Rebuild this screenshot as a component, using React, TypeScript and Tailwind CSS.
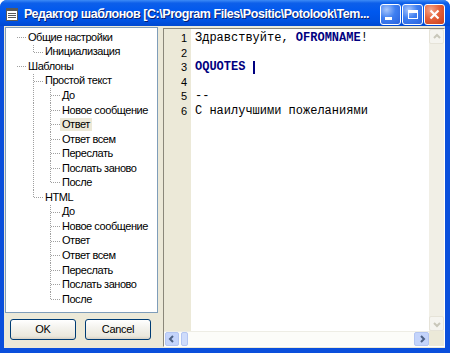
import React from "react";

type Row = { t: string; l: number; last?: boolean; cont?: number[]; sel?: boolean };

const rows: Row[] = [
  { t: "Общие настройки", l: 0 },
  { t: "Инициализация", l: 1, last: true },
  { t: "Шаблоны", l: 0 },
  { t: "Простой текст", l: 1 },
  { t: "До", l: 2, cont: [1] },
  { t: "Новое сообщение", l: 2, cont: [1] },
  { t: "Ответ", l: 2, cont: [1], sel: true },
  { t: "Ответ всем", l: 2, cont: [1] },
  { t: "Переслать", l: 2, cont: [1] },
  { t: "Послать заново", l: 2, cont: [1] },
  { t: "После", l: 2, cont: [1], last: true },
  { t: "HTML", l: 1, last: true },
  { t: "До", l: 2 },
  { t: "Новое сообщение", l: 2 },
  { t: "Ответ", l: 2 },
  { t: "Ответ всем", l: 2 },
  { t: "Переслать", l: 2 },
  { t: "Послать заново", l: 2 },
  { t: "После", l: 2, last: true },
];

const RH = 14.56;

function Guides({ r }: { r: Row }) {
  const w = 20 + 17 * r.l;
  const mid = 7.5;
  const x = 10 + 17 * r.l + 0.5;
  return (
    <svg width={w} height={RH} className="shrink-0" shapeRendering="crispEdges">
      <g stroke="#a0a0a0" strokeWidth="1" strokeDasharray="1 1">
        <line x1={x} y1={mid} x2={x + 10} y2={mid} />
        {r.l >= 1 && <line x1={x} y1={0} x2={x} y2={r.last ? mid : RH} />}
        {(r.cont || []).map((k) => (
          <line key={k} x1={10 + 17 * k + 0.5} y1={0} x2={10 + 17 * k + 0.5} y2={RH} />
        ))}
      </g>
    </svg>
  );
}

function XpButton({ children, red }: { children: React.ReactNode; red?: boolean }) {
  return (
    <div
      className={
        "w-[21px] h-[21px] rounded-[3px] border border-white flex items-center justify-center " +
        (red
          ? "bg-[radial-gradient(circle_at_30%_25%,#f4a58a_0%,#e5623b_45%,#c8401d_100%)]"
          : "bg-[radial-gradient(circle_at_30%_25%,#a8c6fb_0%,#3f7ff1_45%,#2a62dc_100%)]")
      }
    >
      {children}
    </div>
  );
}

function Chevron({ dir, color }: { dir: "up" | "down" | "left" | "right"; color: string }) {
  const paths: Record<string, string> = {
    up: "M2 6 L5 3 L8 6",
    down: "M2 4 L5 7 L8 4",
    left: "M6 2 L3 5 L6 8",
    right: "M4 2 L7 5 L4 8",
  };
  return (
    <svg width="10" height="10" viewBox="0 0 10 10">
      <path d={paths[dir]} stroke={color} strokeWidth="2" fill="none" />
    </svg>
  );
}

export default function App() {
  const sans = { fontFamily: '"Liberation Sans", Arial, sans-serif' };
  const mono = { fontFamily: '"Liberation Mono", "Courier New", monospace' };
  return (
    <div
      className="w-[450px] h-[353px] flex flex-col rounded-t-[7px] overflow-hidden bg-[#0a4fdc]"
      style={sans}
    >
      {/* Title bar */}
      <div className="h-[26px] shrink-0 flex items-center pl-[6px] pr-[5px] bg-[linear-gradient(180deg,#3d8bf6_0%,#0d5fea_12%,#0058ee_45%,#0052e2_80%,#0049d1_100%)]">
        <svg width="12" height="13" viewBox="0 0 12 13" className="shrink-0 mt-[3px]">
          <rect x="0.5" y="0.5" width="11" height="12" fill="#fff" stroke="#5a5a5a" />
          <rect x="1" y="1" width="10" height="2" fill="#5a5a5a" />
          <line x1="2" y1="5.5" x2="10" y2="5.5" stroke="#5a5a5a" />
          <line x1="2" y1="7.5" x2="10" y2="7.5" stroke="#5a5a5a" />
          <line x1="2" y1="9.5" x2="10" y2="9.5" stroke="#5a5a5a" />
        </svg>
        <div className="ml-[6px] mt-[3px] flex-1 text-white font-bold text-[12.5px] whitespace-nowrap tracking-[-0.45px] [text-shadow:1px_1px_0_#0a1e6e]">
          Редактор шаблонов [C:\Program Files\Positic\Potolook\Tem...
        </div>
        <div className="flex gap-[1px] shrink-0 mt-[2px]">
          <XpButton>
            <div className="w-[7px] h-[3px] bg-white mt-[8px] mr-[4px]" />
          </XpButton>
          <XpButton>
            <div className="w-[10px] h-[9px] border border-white border-t-[3px]" />
          </XpButton>
          <XpButton red>
            <svg width="11" height="11" viewBox="0 0 11 11">
              <path d="M1.5 1.5 L9.5 9.5 M9.5 1.5 L1.5 9.5" stroke="#fff" strokeWidth="2.2" />
            </svg>
          </XpButton>
        </div>
      </div>

      {/* Body */}
      <div className="flex-1 flex pl-[4px] pr-[5px] pb-[5px]">
        <div className="flex-1 flex bg-[#ECE9D8]">
          {/* Left column */}
          <div className="w-[159px] shrink-0 flex flex-col pl-[1px] pt-[1px]">
            <div className="w-[153px] h-[286px] bg-white border border-[#7f9db9] pt-[2px] overflow-hidden">
              {rows.map((r, i) => (
                <div key={i} className="flex items-center h-[14.56px]">
                  <Guides r={r} />
                  <span
                    className={
                      "px-[2px] text-[11px] leading-[13px] tracking-[-0.45px] text-black whitespace-nowrap " +
                      (r.sel ? "bg-[#ECE9D8]" : "")
                    }
                  >
                    {r.t}
                  </span>
                </div>
              ))}
            </div>
            <div className="flex gap-[9px] pl-[5px] mt-[6px]">
              {["OK", "Cancel"].map((b) => (
                <div
                  key={b}
                  className="w-[66px] h-[21px] rounded-[3px] border border-[#003c74] bg-[linear-gradient(180deg,#ffffff_0%,#f4f3ee_40%,#ebe8dd_85%,#d6d0c5_100%)] flex items-center justify-center text-[11px] tracking-[-0.3px] text-black"
                >
                  {b}
                </div>
              ))}
            </div>
          </div>

          {/* Editor */}
          <div className="flex-1 flex flex-col mt-[2px] mb-[1px] border-l border-t border-[#8a877a] border-r border-r-white border-b border-b-white">
            <div className="flex-1 flex min-h-0">
              <div className="w-[27px] shrink-0 bg-[#ECE9D8] pt-[2px] pr-[4px] text-right text-[11px] text-black">
                {[1, 2, 3, 4, 5, 6].map((n) => (
                  <div key={n} className="h-[14.5px] leading-[14.5px]">
                    {n}
                  </div>
                ))}
              </div>
              <div className="flex-1 bg-white pt-[2px] pl-[4px] text-[12px] text-black" style={mono}>
                <div className="h-[14.5px] leading-[14.5px] whitespace-pre">
                  Здравствуйте, <b className="text-[#000080]">OFROMNAME</b>!
                </div>
                <div className="h-[14.5px]" />
                <div className="h-[14.5px] leading-[14.5px] whitespace-pre flex items-center">
                  <b className="text-[#000080]">OQUOTES </b>
                  <span className="inline-block w-[2px] h-[13px] bg-[#000080]" />
                </div>
                <div className="h-[14.5px]" />
                <div className="h-[14.5px] leading-[14.5px] whitespace-pre">--</div>
                <div className="h-[14.5px] leading-[14.5px] whitespace-pre">С наилучшими пожеланиями</div>
              </div>
              {/* vertical scrollbar */}
              <div className="w-[15px] shrink-0 bg-[#f1efe6] flex flex-col justify-between">
                <div className="h-[15px] rounded-[2px] border border-[#e6e3d8] bg-[#f5f4ef] flex items-center justify-center">
                  <Chevron dir="up" color="#c9c7ba" />
                </div>
                <div className="h-[15px] rounded-[2px] border border-[#e6e3d8] bg-[#f5f4ef] flex items-center justify-center">
                  <Chevron dir="down" color="#c9c7ba" />
                </div>
              </div>
            </div>
            {/* horizontal scrollbar */}
            <div className="h-[15px] shrink-0 flex">
              <div className="flex-1 flex bg-[#fcfcf9] border-t border-[#eeede5]">
                <div className="w-[14px] h-[14px] ml-[1px] rounded-[2px] border border-[#b3c5f2] bg-[#c4d4fb] flex items-center justify-center">
                  <Chevron dir="left" color="#4d6185" />
                </div>
                <div className="w-[7px] h-[14px] ml-[2px] rounded-[2px] border border-[#b3c5f2] bg-[#cfdcfb]" />
                <div className="flex-1" />
                <div className="w-[15px] h-[14px] rounded-[2px] border border-[#b3c5f2] bg-[#c4d4fb] flex items-center justify-center">
                  <Chevron dir="right" color="#4d6185" />
                </div>
              </div>
              <div className="w-[15px] shrink-0 bg-[#ECE9D8]" />
            </div>
          </div>
        </div>
      </div>
    </div>
  );
}
